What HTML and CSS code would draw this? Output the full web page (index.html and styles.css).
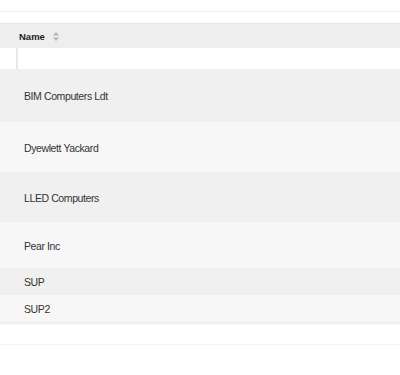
FILE: index.html
```html
<!DOCTYPE html>
<html lang="en">
<head>
    <meta charset="UTF-8">
    <meta name="viewport" content="width=device-width, initial-scale=1.0">
    <title>Suppliers</title>
    <link rel="stylesheet" href="styles.css">
</head>
<body>
    <div class="toolbar"></div>
    <div class="grid-wrap">
        <table class="grid">
            <thead>
                <tr class="head-row">
                    <th>
                        <span class="col-title">Name</span>
                        <svg class="sort-icon" width="6" height="9" viewBox="0 0 6 9">
                            <path d="M3 0 L6 3.5 L0 3.5 Z" fill="#b5b5b5"/>
                            <path d="M3 9 L6 5.5 L0 5.5 Z" fill="#b5b5b5"/>
                        </svg>
                    </th>
                </tr>
                <tr class="filter-row">
                    <td><div class="filter-cell"></div></td>
                </tr>
            </thead>
            <tbody>
                <tr class="row-odd tall-1"><td>BIM Computers Ldt</td></tr>
                <tr class="row-even tall-2"><td>Dyewlett Yackard</td></tr>
                <tr class="row-odd tall-2"><td>LLED Computers</td></tr>
                <tr class="row-even tall-3"><td>Pear Inc</td></tr>
                <tr class="row-odd short"><td>SUP</td></tr>
                <tr class="row-even short"><td>SUP2</td></tr>
            </tbody>
        </table>
    </div>
    <div class="footer"></div>
</body>
</html>
```

FILE: styles.css
```css
body {
    margin: 0;
    background-color: white;
    font-family: "Liberation Sans", Arial, sans-serif;
}
.toolbar {
    height: 11px;
    border-bottom: 1px solid #ececec;
}
.grid-wrap {
    margin-top: 11px;
    box-shadow: 0 1px 3px rgba(0, 0, 0, 0.14);
}
.grid {
    width: 100%;
    border-collapse: collapse;
}
.grid th,
.grid td {
    padding: 0;
    text-align: left;
}
.grid .head-row th {
    height: 24px;
    background-color: #eeeeee;
    border-top: 1px solid #e6e6e6;
    padding-left: 19px;
    font-size: 9.5px;
    font-weight: bold;
    color: #1f1f1f;
    vertical-align: middle;
}
.col-title {
    vertical-align: middle;
}
.sort-icon {
    margin-left: 5px;
    vertical-align: middle;
}
.grid .filter-row td {
    height: 21px;
    background-color: white;
    padding-left: 16px;
}
.filter-cell {
    height: 21px;
    border-left: 2px solid #e8e8e8;
}
.grid tbody td {
    padding-left: 24px;
    padding-top: 1px;
    font-size: 10.5px;
    letter-spacing: -0.4px;
    color: #333333;
    vertical-align: middle;
}
.row-odd td {
    background-color: #f0f0f0;
}
.row-even td {
    background-color: #f7f7f7;
}
.tall-1 td {
    height: 52px;
}
.tall-2 td {
    height: 49px;
}
.tall-3 td {
    height: 45px;
}
.short td {
    height: 26px;
}
.footer {
    margin-top: 22px;
    border-top: 1px solid #f3f3f3;
}
```
